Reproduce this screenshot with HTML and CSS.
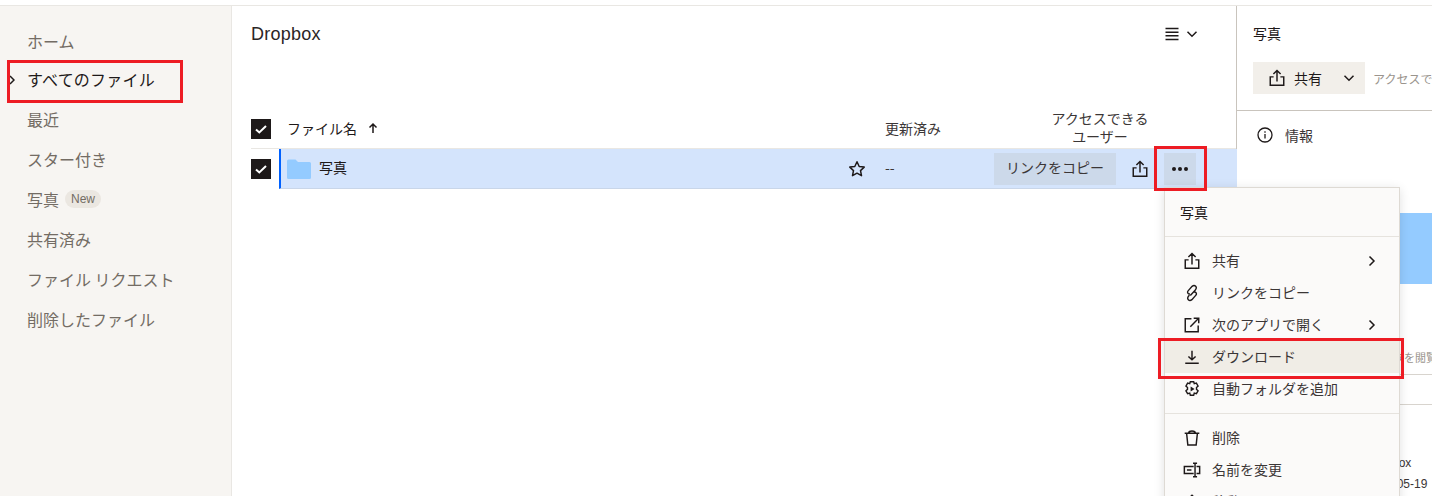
FILE: index.html
```html
<!DOCTYPE html>
<html lang="ja">
<head>
<meta charset="utf-8">
<title>Dropbox</title>
<link rel="stylesheet" href="styles.css">
</head>
<body>
<div class="app">
  <nav class="sidebar">
    <a class="nav-item">ホーム</a>
    <a class="nav-item current"><svg class="caret" viewBox="0 0 6 10"><path d="M1 1l4 4-4 4" fill="none" stroke="#1e1919" stroke-width="1.5"/></svg>すべてのファイル</a>
    <a class="nav-item">最近</a>
    <a class="nav-item">スター付き</a>
    <a class="nav-item">写真<span class="badge">New</span></a>
    <a class="nav-item">共有済み</a>
    <a class="nav-item">ファイル リクエスト</a>
    <a class="nav-item">削除したファイル</a>
  </nav>

  <main class="main">
    <header class="main-head">
      <h1 class="crumb">Dropbox</h1>
      <div class="view-toggle">
        <svg class="i16" viewBox="0 0 16 16"><path d="M1.5 2.5h13M1.5 6.2h13M1.5 9.8h13M1.5 13.5h13" stroke="#1e1919" stroke-width="1.4" fill="none"/></svg>
        <svg class="i12" viewBox="0 0 12 12"><path d="M1.5 3.8L6 8.2l4.5-4.4" stroke="#1e1919" stroke-width="1.5" fill="none"/></svg>
      </div>
    </header>
    <div class="table-head">
      <span class="check"><svg viewBox="0 0 20 20"><path d="M5 10.5l3.3 3L15 7" stroke="#fff" stroke-width="2" fill="none"/></svg></span>
      <span class="col-name">ファイル名<svg class="arrow" viewBox="0 0 12 12"><path d="M6 11V2M2.5 5.5L6 2l3.500 3.500" stroke="#1e1919" stroke-width="1.500" fill="none"/></svg></span>
      <span class="col-mod">更新済み</span>
      <span class="col-access">アクセスできる<br>ユーザー</span>
    </div>
    <div class="row-wrap">
      <span class="check"><svg viewBox="0 0 20 20"><path d="M5 10.5l3.3 3L15 7" stroke="#fff" stroke-width="2" fill="none"/></svg></span>
      <div class="row">
        <svg class="folder" viewBox="0 0 24 20"><path d="M0 2a1.500 1.500 0 0 1 1.500-1.500h7L11 3h11.500A1.500 1.500 0 0 1 24 4.500v14a1.500 1.500 0 0 1-1.500 1.500h-21A1.500 1.500 0 0 1 0 18.500z" fill="#94cbff"/></svg>
        <span class="row-name">写真</span>
        <svg class="star" viewBox="0 0 18 18"><path d="M9 1.800l2.200 4.700 5 .6-3.700 3.500 1 5.100L9 13.200l-4.500 2.500 1-5.100L1.800 7.100l5-.6z" fill="none" stroke="#1e1919" stroke-width="1.500" stroke-linejoin="round"/></svg>
        <span class="row-mod">--</span>
        <button class="copy-btn">リンクをコピー</button>
        <svg class="share-icon" viewBox="0 0 16 16"><path d="M8 11V1.500M4.800 4.500L8 1.300l3.200 3.200M5 7H2v7.500h12V7h-3" fill="none" stroke="#1e1919" stroke-width="1.300"/></svg>
        <button class="more-btn"><i></i><i></i><i></i></button>
      </div>
    </div>
  </main>

  <aside class="panel">
    <div class="panel-title">写真</div>
    <div class="panel-actions">
      <div class="share-btn">
        <svg class="share-icon" viewBox="0 0 16 16"><path d="M8 11V1.500M4.800 4.500L8 1.300l3.200 3.200M5 7H2v7.500h12V7h-3" fill="none" stroke="#1e1919" stroke-width="1.300"/></svg>
        <span class="share-label">共有</span>
        <svg class="i12" viewBox="0 0 12 12"><path d="M1.500 3.800L6 8.200l4.500-4.400" stroke="#1e1919" stroke-width="1.500" fill="none"/></svg>
      </div>
      <span class="access-note">アクセスできるユーザー</span>
    </div>
    <div class="info-tab">
      <svg class="i16" viewBox="0 0 16 16"><circle cx="8" cy="8" r="7" fill="none" stroke="#1e1919" stroke-width="1.300"/><path d="M8 7v4.500M8 4.200v1.500" stroke="#1e1919" stroke-width="1.300"/></svg>
      <span>情報</span>
    </div>
    <div class="preview"></div>
    <div class="preview-note"><span>このフォルダを閲覧</span></div>
    <div class="panel-gap"></div>
    <div class="meta"><span>場所</span><span>Dropbox</span></div>
    <div class="meta"><span>更新</span><span>2023-05-19</span></div>
  </aside>
</div>

<div class="menu">
  <div class="menu-title">写真</div>
  <ul class="menu-list">
    <li class="menu-item"><svg class="mi" viewBox="0 0 16 16"><path d="M8 11V1.500M4.800 4.500L8 1.300l3.200 3.200M5 7H2v7.500h12V7h-3" fill="none" stroke="#1e1919" stroke-width="1.300"/></svg><span>共有</span><svg class="chev" viewBox="0 0 8 12"><path d="M1.500 1.500L6 6l-4.500 4.500" fill="none" stroke="#1e1919" stroke-width="1.500"/></svg></li>
    <li class="menu-item"><svg class="mi" viewBox="0 0 16 16"><path d="M6.500 10.200l4.300-4.700c2.500-2.700-.4-5.300-2.700-3.400L4.700 5.900c-1.400 1.500-.1 3.300 1.600 2.900M9.700 7.200c1.700-.4 3 1.400 1.600 2.900l-3.400 3.800c-2.300 1.900-5.200-.7-2.700-3.400l.6-.6" fill="none" stroke="#1e1919" stroke-width="1.250"/></svg><span>リンクをコピー</span></li>
    <li class="menu-item"><svg class="mi" viewBox="0 0 16 16"><path d="M7.500 2.500H2v11.500h11.500V8.500M6.500 9.500L13.500 2.500M9.500 2H14V6.500" fill="none" stroke="#1e1919" stroke-width="1.300"/></svg><span>次のアプリで開く</span><svg class="chev" viewBox="0 0 8 12"><path d="M1.500 1.500L6 6l-4.500 4.500" fill="none" stroke="#1e1919" stroke-width="1.500"/></svg></li>
    <li class="menu-item active"><svg class="mi" viewBox="0 0 16 16"><path d="M8 2.500v8M4.800 7.500L8 10.500l3.200-3M2 13.500h12" fill="none" stroke="#1e1919" stroke-width="1.300"/></svg><span>ダウンロード</span></li>
    <li class="menu-item"><svg class="mi" viewBox="0 0 16 16"><path d="M6.500 1.500h3l.5 1.800 1.900-.5 1.500 2.600-1.400 1.300v1.600l1.400 1.300-1.500 2.600-1.900-.5-.5 1.800h-3l-.5-1.800-1.900.5-1.500-2.600 1.400-1.300V6.700L2.600 5.400l1.500-2.600 1.900.5z" fill="none" stroke="#1e1919" stroke-width="1.250"/><path d="M6.800 5.800v4.400L10.300 8z" fill="#1e1919"/></svg><span>自動フォルダを追加</span></li>
  </ul>
  <ul class="menu-list">
    <li class="menu-item"><svg class="mi" viewBox="0 0 16 16"><path d="M1.500 3.800h13M3.200 3.800l1.100 10.500h7.400l1.100-10.500M5 3.800C5 2.200 6.200 1.700 8 1.700s3 .5 3 2.100" fill="none" stroke="#1e1919" stroke-width="1.300"/></svg><span>削除</span></li>
    <li class="menu-item"><svg class="mi" viewBox="0 0 16 16"><path d="M9.500 4.800H1.200v6.400h8.300M12 4.800h2.800v6.400H12M10.700 2v12M8.900 2h3.600M8.900 14h3.600M3.500 8h4" fill="none" stroke="#1e1919" stroke-width="1.300"/></svg><span>名前を変更</span></li>
    <li class="menu-item"><svg class="mi" viewBox="0 0 16 16"><path d="M8 15V2M4.500 5.500L8 2l3.500 3.500" fill="none" stroke="#1e1919" stroke-width="1.300"/></svg><span>移動</span></li>
  </ul>
</div>

<div class="mark mark-nav"></div>
<div class="mark mark-more"></div>
<div class="mark mark-download"></div>
</body>
</html>
```

FILE: styles.css
```css
* { box-sizing: border-box; }
html, body { margin: 0; height: 496px; overflow: hidden; background: #fff; }
body {
  position: relative;
  font-family: "Noto Sans CJK JP", "Liberation Sans", sans-serif;
  font-size: 14px;
  color: #1e1919;
  padding-top: 5px;
}
svg { display: block; flex: none; }
ul { list-style: none; margin: 0; padding: 0; }

.app {
  display: flex;
  height: 491px;
  border-top: 1px solid #e9e7e3;
}

/* sidebar */
.sidebar {
  flex: none;
  width: 232px;
  padding-top: 15px;
  background: #f7f5f2;
  border-right: 1px solid #e9e7e3;
}
.nav-item {
  position: relative;
  display: flex;
  align-items: center;
  height: 40px;
  padding-left: 27px;
  font-size: 16px;
  color: #736c64;
}
.nav-item.current { color: #1e1919; height: 38px; padding: 0 0 2px 27px; letter-spacing: .2px; }
.caret { position: absolute; left: 9px; top: 14px; width: 6px; height: 10px; }
.badge {
  margin-left: 6px;
  padding: 0 6px;
  height: 18px;
  line-height: 18px;
  border-radius: 9px;
  background: #ebe7e1;
  font-family: "Liberation Sans", sans-serif;
  font-size: 12px;
  color: #736c64;
}

/* main */
.main {
  flex: none;
  width: 1005px;
  padding-left: 19px;
  border-right: 1px solid #c9c4bd;
}
.main-head {
  display: flex;
  justify-content: space-between;
  height: 103px;
  padding: 16px 38px 0 0;
}
.crumb {
  margin: 0;
  font-family: "Liberation Sans", sans-serif;
  font-size: 18px;
  font-weight: 400;
  line-height: 24px;
  letter-spacing: .25px;
  color: #2b2626;
}
.view-toggle { display: flex; align-items: center; gap: 6px; height: 24px; }
.i16 { width: 16px; height: 16px; }
.i12 { width: 12px; height: 12px; }

.table-head {
  display: flex;
  align-items: center;
  height: 40px;
  border-bottom: 1px solid #e9e7e3;
}
.check {
  flex: none;
  width: 20px;
  height: 20px;
  background: #1e1919;
  display: block;
}
.col-name {
  display: flex;
  align-items: center;
  width: 598px;
  margin-left: 16px;
  padding-bottom: 2px;
}
.arrow { width: 12px; height: 12px; margin-left: 10px; }
.col-mod { width: 150px; padding-bottom: 2px; color: #3b3636; }
.col-access {
  width: 130px;
  text-align: center;
  line-height: 18px;
  padding-bottom: 4px;
  color: #3b3636;
}

.row-wrap { display: flex; align-items: center; height: 40px; }
.row {
  flex: 1;
  display: flex;
  align-items: center;
  height: 40px;
  margin-left: 8px;
  margin-right: -1px;
  padding-left: 6px;
  background: #d4e4fc;
  border-left: 2px solid #0061fe;
  border-bottom: 1px solid #c9d6e9;
}
.folder { width: 24px; height: 20px; }
.row-name { margin-left: 8px; width: 529px; padding-bottom: 4px; }
.star { width: 18px; height: 18px; }
.row-mod { margin-left: 19px; width: 109px; padding-bottom: 4px; color: #3b3636; }
.copy-btn {
  width: 122px;
  height: 32px;
  padding: 0 0 4px;
  border: 0;
  background: #ccd9ea;
  font: inherit;
  color: #3b3636;
}
.share-icon { width: 18px; height: 18px; margin-left: 15px; }
.more-btn {
  display: flex;
  align-items: center;
  justify-content: center;
  gap: 2px;
  width: 32px;
  height: 32px;
  margin-left: 15px;
  padding: 0;
  border: 0;
  background: #ccd9ea;
}
.more-btn i { width: 4px; height: 4px; border-radius: 50%; background: #1e1919; }

/* right panel */
.panel { flex: 1; min-width: 0; overflow: hidden; }
.panel-title { height: 56px; padding: 16px 0 0 16px; line-height: 22px; }
.panel-actions {
  display: flex;
  align-items: center;
  gap: 8px;
  height: 32px;
  padding: 0 0 16px 16px;
  border-bottom: 1px solid #c9c4bd;
  box-sizing: content-box;
  white-space: nowrap;
}
.share-btn {
  flex: none;
  display: flex;
  align-items: center;
  width: 112px;
  height: 32px;
  background: #f2efea;
}
.share-btn .share-icon { margin-left: 15px; }
.share-label { margin: 0 0 0 8px; width: 49px; }
.access-note { font-size: 12px; color: #9a948d; }
.info-tab { display: flex; align-items: center; gap: 12px; height: 48px; padding-left: 20px; color: #3b3636; }
.preview { height: 71px; margin: 54px 0 0 16px; background: #94cbff; }
.preview-note {
  display: flex;
  justify-content: flex-end;
  height: 91px;
  padding: 65px 0 0 16px;
  margin-right: -5px;
  font-size: 11px;
  color: #9a948d;
  white-space: nowrap;
  border-bottom: 1px solid #d8d4ce;
}
.panel-gap { height: 30px; border-bottom: 1px solid #d8d4ce; margin-bottom: 47px; }
.meta { display: flex; height: 21px; align-items: center; padding-left: 129px; font-family: "Liberation Sans", sans-serif; font-size: 12px; color: #3b3636; }
.meta span:first-child { width: 0; visibility: hidden; }

/* context menu */
.menu {
  position: absolute;
  left: 1164px;
  top: 187px;
  width: 236px;
  height: 340px;
  background: #fbfaf9;
  border: 1px solid #dedad4;
  box-shadow: 0 2px 10px rgba(0, 0, 0, .12);
}
.menu-title { height: 49px; padding: 13px 0 0 15px; line-height: 22px; border-bottom: 1px solid #e6e3de; }
.menu-list { padding: 8px 0; }
.menu-list + .menu-list { border-top: 1px solid #e6e3de; padding-top: 8px; }
.menu-item { display: flex; align-items: center; height: 32px; padding-left: 18px; color: #3b3636; }
.menu-item span { padding-bottom: 2px; }
.menu-item.active { background: #f0ede6; }
.mi { width: 18px; height: 18px; margin-right: 11px; }
.chev { width: 8px; height: 12px; margin-left: auto; margin-right: 23px; }

/* annotation boxes */
.mark { position: absolute; border: 3px solid #ed1c24; }
.mark-nav { left: 7px; top: 60px; width: 176px; height: 43px; }
.mark-more { left: 1154px; top: 146px; width: 53px; height: 45px; }
.mark-download { left: 1158px; top: 338px; width: 246px; height: 41px; }
```
